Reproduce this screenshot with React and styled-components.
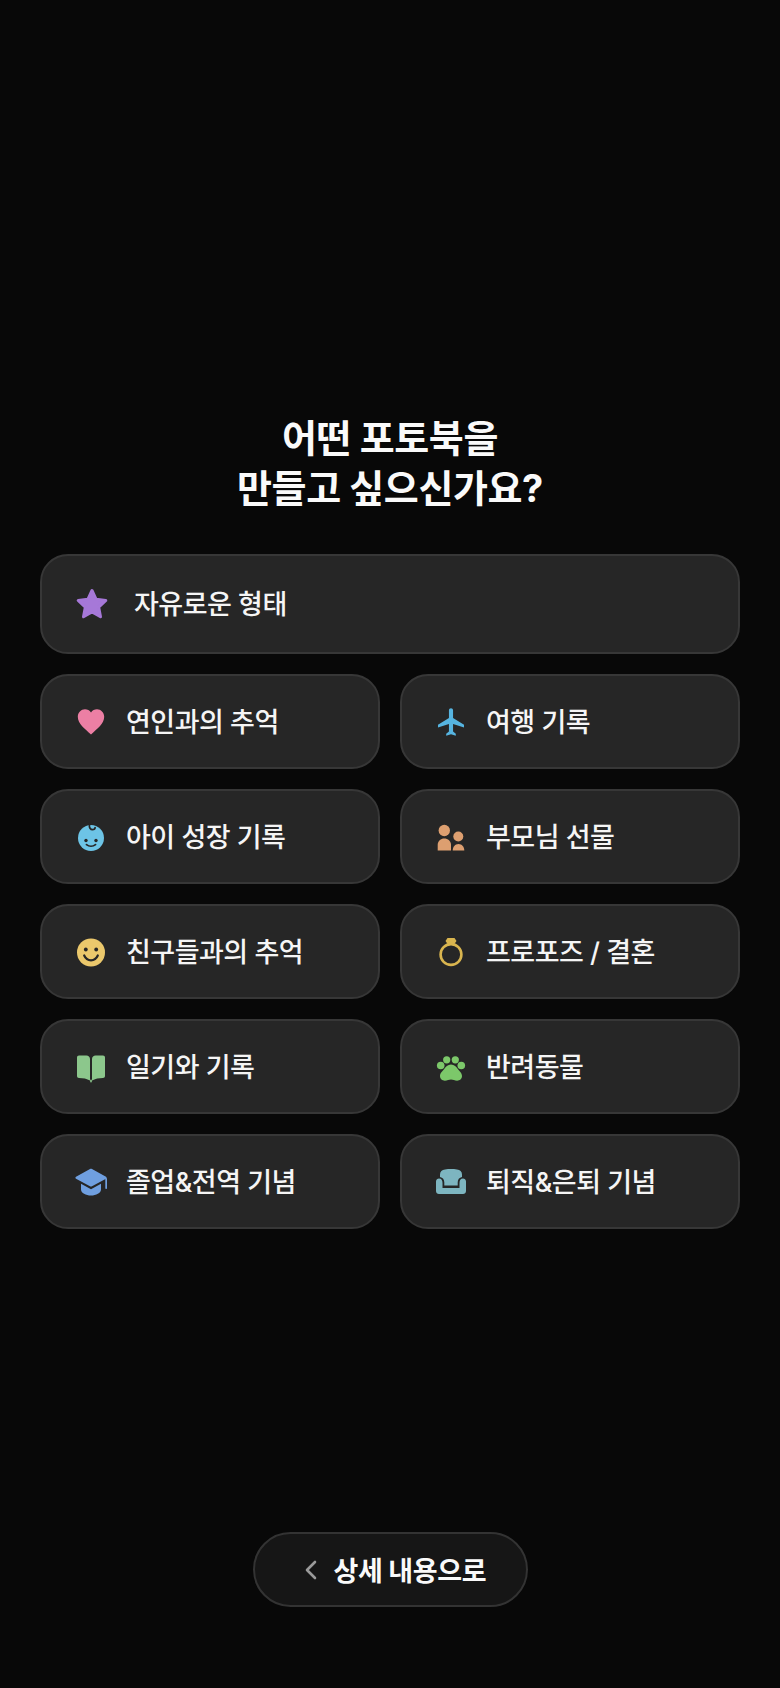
import styled, { createGlobalStyle } from "styled-components";

const GlobalStyle = createGlobalStyle`
  html, body {
    margin: 0;
    padding: 0;
    background: #080808;
  }
  * {
    box-sizing: border-box;
  }
`;

const FONT = `"Inter", "Noto Sans CJK KR", "Noto Sans", sans-serif`;

const Page = styled.div`
  width: 780px;
  height: 1688px;
  padding: 413px 40px 81px;
  display: flex;
  flex-direction: column;
  background: #080808;
  font-family: ${FONT};
  overflow: hidden;
`;

const Title = styled.h1`
  margin: 0 0 41px;
  text-align: center;
  color: #fafafa;
  font-size: 38px;
  line-height: 50px;
  font-weight: 700;
  letter-spacing: -0.4px;
`;

const Grid = styled.div`
  display: grid;
  grid-template-columns: 340px 340px;
  grid-auto-rows: 95px;
  gap: 20px;
`;

const Card = styled.button`
  display: flex;
  align-items: center;
  gap: 19px;
  padding: 0 0 0 33px;
  background: #262626;
  border: 2px solid #373737;
  border-radius: 28px;
  color: #f5f5f5;
  font-family: inherit;
  text-align: left;
`;

const FreeCard = styled(Card)`
  width: 700px;
  height: 100px;
  margin-bottom: 20px;
  gap: 26px;
  padding-left: 34px;
`;

const IconSlot = styled.span`
  flex: none;
  width: 32px;
  height: 32px;
  display: block;
  color: ${({ $color }) => $color};
  svg {
    display: block;
  }
`;

const Label = styled.span`
  padding-top: 2px;
  font-size: 27px;
  font-weight: 500;
  letter-spacing: -0.5px;
  line-height: 40px;
  white-space: nowrap;
`;

const BackButton = styled.button`
  align-self: center;
  margin-top: auto;
  width: 275px;
  height: 75px;
  display: flex;
  align-items: center;
  gap: 17px;
  padding: 0 0 0 50px;
  background: #161616;
  border: 2px solid #333333;
  border-radius: 38px;
  color: #fafafa;
  font-family: inherit;
  font-size: 27px;
  font-weight: 700;
  letter-spacing: -0.4px;
`;

const Icon = ({ children }) => (
  <svg width="32" height="32" viewBox="0 0 32 32" fill="currentColor">
    {children}
  </svg>
);

const DARK = "#262626";

const StarIcon = () => (
  <Icon>
    <polygon
      points="16,2.5 20.1,11.3 29.8,12.5 22.7,19.2 24.5,28.7 16,24 7.5,28.7 9.3,19.2 2.2,12.5 11.9,11.3"
      stroke="currentColor"
      strokeWidth="3"
      strokeLinejoin="round"
    />
  </Icon>
);

const HeartIcon = () => (
  <Icon>
    <path d="M16 28.5C10 23 2.8 17.8 2.8 10.8 2.8 6.4 6.2 3.2 10 3.2c2.4 0 4.6 1.2 6 3.2 1.4-2 3.6-3.2 6-3.2 3.8 0 7.2 3.2 7.2 7.6 0 7-7.2 12.2-13.2 17.7z" />
  </Icon>
);

const PlaneIcon = () => (
  <Icon>
    <path
      transform="translate(16 16) scale(1.37) translate(-11.5 -12)"
      d="M21 16v-2l-8-5V3.5c0-.83-.67-1.5-1.5-1.5S10 2.67 10 3.5V9l-8 5v2l8-2.5V19l-2 1.5V22l3.5-1 3.5 1v-1.5L13 19v-5.5l8 2.5z"
    />
  </Icon>
);

const BabyIcon = () => (
  <Icon>
    <circle cx="16" cy="17" r="13" />
    <circle cx="11" cy="19.5" r="1.7" fill={DARK} />
    <circle cx="21" cy="19.5" r="1.7" fill={DARK} />
    <path d="M11.5 23.6c2.6 2 6.4 2 9 0" fill="none" stroke={DARK} strokeWidth="1.8" strokeLinecap="round" />
    <path d="M14.5 3.5c-.6 3 1 5.2 3 5.2 1.6 0 2.6-1 2.6-2.2" fill="none" stroke={DARK} strokeWidth="1.7" strokeLinecap="round" />
  </Icon>
);

const PeopleIcon = () => (
  <Icon>
    <circle cx="9.3" cy="9.5" r="5.7" />
    <path d="M2.7 29.5V23.8c0-3.6 3-6.3 6.6-6.3s6.7 2.7 6.7 6.3v5.7z" />
    <circle cx="23.3" cy="15.5" r="5" />
    <path d="M17.7 29.5c0-3.6 2.4-6.5 5.8-6.5s5.8 2.9 5.8 6.5z" />
  </Icon>
);

const SmileIcon = () => (
  <Icon>
    <circle cx="16" cy="16.5" r="14" />
    <circle cx="10.8" cy="13.5" r="1.9" fill={DARK} />
    <circle cx="21.2" cy="13.5" r="1.9" fill={DARK} />
    <path d="M9.2 19.5c1.4 3.2 3.8 4.8 6.8 4.8s5.4-1.6 6.8-4.8" fill="none" stroke={DARK} strokeWidth="2.2" strokeLinecap="round" />
  </Icon>
);

const RingIcon = () => (
  <Icon>
    <circle cx="16" cy="18.5" r="10.4" fill="none" stroke="currentColor" strokeWidth="2.6" />
    <polygon points="12.5,2 19.5,2 21.5,5 19,8.5 13,8.5 10.5,5" />
  </Icon>
);

const BookIcon = () => (
  <Icon>
    <path d="M4 4.5h7.5c1.8 0 3.5 1.5 3.5 3.5v21.500c-3-1.700-7-2.500-11-2.500-1.200 0-2-.8-2-2V6.500c0-1.200.8-2 2-2z" />
    <path d="M28 4.500h-7.500c-1.800 0-3.500 1.500-3.500 3.500v21.500c3-1.700 7-2.500 11-2.500 1.200 0 2-.8 2-2V6.500c0-1.200-.8-2-2-2z" />
    <rect x="15.2" y="28.5" width="1.6" height="3" rx="0.8" />
  </Icon>
);

const PawIcon = () => (
  <Icon>
    <circle cx="5.7" cy="14.5" r="3.8" />
    <circle cx="11.7" cy="8.8" r="3.6" />
    <circle cx="20.3" cy="8.8" r="3.6" />
    <circle cx="26.3" cy="14.5" r="3.8" />
    <path d="M16 13.5c3.2 0 5.500 2.200 7 4.700 1.500 2 4 3.500 4 6.800 0 2.800-2.400 4.700-4.800 4.700-2.500 0-4.200-1.200-6.200-1.200s-3.700 1.200-6.200 1.200C7.400 29.700 5 27.800 5 25c0-3.300 2.500-4.800 4-6.800 1.500-2.500 3.800-4.700 7-4.700z" />
  </Icon>
);

const CapIcon = () => (
  <Icon>
    <path d="M15 3 1 10.7c-.8.5-.8 1.5 0 2l14 7.5c.6.3 1.400.3 2 0l14-7.500c.8-.5.8-1.500 0-2L17 3c-.6-.4-1.400-.4-2 0z" />
    <path d="M6 17.800v5.700C6 27 11 29.500 16 29.500s10-2.500 10-6v-5.700l-10 5.400z" />
    <rect x="30.3" y="12" width="1.7" height="11" rx="0.8" />
  </Icon>
);

const ChairIcon = () => (
  <Icon>
    <path d="M10 3.500c4-.6 8-.6 12 0 3 .4 5 2.200 5 5v2.600c-2.800.4-4.300 2.700-4.300 5.400v3H9.300v-3c0-2.700-1.500-5-4.300-5.400V8.500c0-2.800 2-4.600 5-5z" />
    <path d="M1 15.500c0-2 1.500-3 3-3 2.500 0 3.500 2 3.500 4.500v5h17v-5c0-2.500 1-4.500 3.500-4.500 1.500 0 3 1 3 3V25c0 1.700-1.300 3-3 3H4c-1.700 0-3-1.300-3-3z" />
  </Icon>
);

const items = [
  { label: "연인과의 추억", color: "#ec7fa4", icon: <HeartIcon /> },
  { label: "여행 기록", color: "#56b4e0", icon: <PlaneIcon /> },
  { label: "아이 성장 기록", color: "#6dc4e6", icon: <BabyIcon /> },
  { label: "부모님 선물", color: "#dd9f70", icon: <PeopleIcon /> },
  { label: "친구들과의 추억", color: "#ebc86c", icon: <SmileIcon /> },
  { label: "프로포즈 / 결혼", color: "#d9b54f", icon: <RingIcon /> },
  { label: "일기와 기록", color: "#8cc78c", icon: <BookIcon /> },
  { label: "반려동물", color: "#7cc86a", icon: <PawIcon /> },
  { label: "졸업&전역 기념", color: "#6f9fe0", icon: <CapIcon /> },
  { label: "퇴직&은퇴 기념", color: "#7db5c0", icon: <ChairIcon /> },
];

export default function App() {
  return (
    <>
      <GlobalStyle />
      <Page>
        <Title>
          어떤 포토북을
          <br />
          만들고 싶으신가요?
        </Title>
        <FreeCard>
          <IconSlot $color="#a678d8">
            <StarIcon />
          </IconSlot>
          <Label>자유로운 형태</Label>
        </FreeCard>
        <Grid>
          {items.map((item) => (
            <Card key={item.label}>
              <IconSlot $color={item.color}>{item.icon}</IconSlot>
              <Label>{item.label}</Label>
            </Card>
          ))}
        </Grid>
        <BackButton>
          <svg width="12" height="20" viewBox="0 0 12 20" fill="none">
            <polyline points="10,2 2,10 10,18" stroke="#9a9a9a" strokeWidth="2.6" strokeLinecap="round" strokeLinejoin="round" />
          </svg>
          상세 내용으로
        </BackButton>
      </Page>
    </>
  );
}
